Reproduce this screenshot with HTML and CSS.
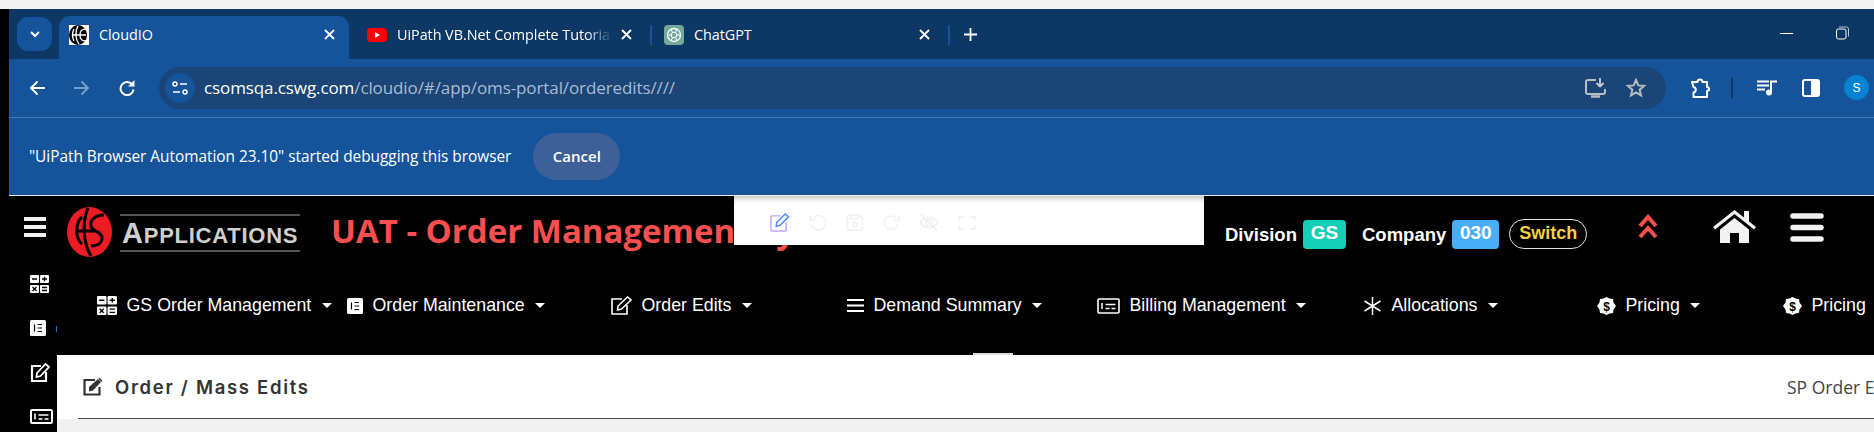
FILE: index.html
```html
<!DOCTYPE html>
<html lang="en">
<head>
<meta charset="utf-8">
<title>CloudIO</title>
<link rel="stylesheet" href="styles.css">
</head>
<body>
<div class="topstrip"></div>
<div class="shell">
  <div class="leftedge"></div>
  <div class="window">
    <div class="tabstrip">
      <div class="tabsearch"><svg width="14" height="14" viewBox="0 0 14 14"><path d="M3 5l4 4 4-4" fill="none" stroke="#fff" stroke-width="2"/></svg></div>
      <div class="tab active">
        <svg class="fav" width="20" height="20" viewBox="0 0 20 20"><rect width="20" height="20" fill="#fff"/><ellipse cx="9" cy="10" rx="9" ry="10" fill="#000"/><path d="M9 1C6 6 6 14 10 19M5 4C3 8 3 12 5 16M4 10h13M17 4c-5 0-6 2-6 6s1 6 6 6" stroke="#fff" stroke-width="1.400" fill="none"/></svg>
        <span class="tabtitle">CloudIO</span>
        <svg class="tabx" width="11" height="11" viewBox="0 0 11 11"><path d="M1 1l9 9M10 1l-9 9" stroke="#fff" stroke-width="1.800"/></svg>
      </div>
      <div class="tab yt">
        <svg class="fav" width="20" height="20" viewBox="0 0 20 20"><rect y="3" width="20" height="14" rx="4" fill="#f00"/><path d="M8 7l5 3-5 3z" fill="#fff"/></svg>
        <span class="tabtitle fade">UiPath VB.Net Complete Tutoria</span>
        <svg class="tabx" width="11" height="11" viewBox="0 0 11 11"><path d="M1 1l9 9M10 1l-9 9" stroke="#fff" stroke-width="1.800"/></svg>
      </div>
      <div class="tabsep"></div>
      <div class="tab gpt">
        <svg class="fav" width="20" height="20" viewBox="0 0 20 20"><rect width="20" height="20" rx="4" fill="#74aa9c"/><circle cx="10" cy="10" r="6.500" fill="none" stroke="#fff" stroke-width="1.300"/><path d="M7 4.500l6 11M13 4.500l-6 11M3.500 10h13" stroke="#fff" stroke-width="1"/><circle cx="10" cy="10" r="2.800" fill="#74aa9c" stroke="#fff"/></svg>
        <span class="tabtitle">ChatGPT</span>
        <svg class="tabx" width="11" height="11" viewBox="0 0 11 11"><path d="M1 1l9 9M10 1l-9 9" stroke="#fff" stroke-width="1.800"/></svg>
      </div>
      <div class="tabsep"></div>
      <div class="newtab"><svg width="13" height="13" viewBox="0 0 13 13"><path d="M6.500 0v13M0 6.500h13" stroke="#fff" stroke-width="1.800"/></svg></div>
      <div class="winctl">
        <svg width="13" height="14" viewBox="0 0 13 14"><path d="M0 7.500h13" stroke="#fff" stroke-width="1"/></svg>
        <svg width="13" height="14" viewBox="0 0 13 14"><rect x=".5" y="3" width="9.500" height="10" rx="2" fill="none" stroke="#fff"/><path d="M3 1h7.500A2 2 0 0 1 12.500 3v7.500" fill="none" stroke="#b9c7d8"/></svg>
      </div>
    </div>
    <div class="toolbar">
      <svg class="navicon" width="16" height="16" viewBox="0 0 16 16"><path d="M16 8H2M8.500 1.500L2 8l6.500 6.500" fill="none" stroke="#fff" stroke-width="2"/></svg>
      <svg class="navicon" width="16" height="16" viewBox="0 0 16 16"><path d="M0 8h14M7.500 1.500L14 8l-6.500 6.500" fill="none" stroke="#7c9cc4" stroke-width="2"/></svg>
      <svg class="navicon" width="16" height="16" viewBox="0 0 16 16"><path d="M13.500 5A6.500 6.500 0 1 0 14.500 9.500" fill="none" stroke="#fff" stroke-width="2"/><path d="M15.500 0v6.500H9z" fill="#fff"/></svg>
      <div class="omnibox">
        <div class="sitebtn"><svg width="18" height="16" viewBox="0 0 18 16"><circle cx="4" cy="4" r="2" fill="none" stroke="#fff" stroke-width="1.500"/><path d="M9 4h7M2 12h7" stroke="#fff" stroke-width="1.500"/><circle cx="14" cy="12" r="2" fill="none" stroke="#fff" stroke-width="1.500"/></svg></div>
        <div class="url"><span class="host">csomsqa.cswg.com</span>/cloudio/#/app/oms-portal/orderedits////</div>
        <svg class="omniicon install" width="21" height="20" viewBox="0 0 21 20"><path d="M11 2H3a2 2 0 0 0-2 2v10a2 2 0 0 0 2 2h15a2 2 0 0 0 2-2v-3" fill="none" stroke="#b8bcc4" stroke-width="2"/><path d="M6 18.500h9" stroke="#b8bcc4" stroke-width="2.500"/><path d="M15 0v7.500M11.500 5l3.500 3.500L18.500 5" fill="none" stroke="#c8ccd2" stroke-width="1.800"/></svg>
        <svg class="omniicon star" width="20" height="20" viewBox="0 0 20 20"><path d="M10 2l2.300 5.400 5.700.5-4.300 3.800 1.300 5.700-5-3-5 3 1.300-5.700L2 7.900l5.700-.5z" fill="none" stroke="#b8bcc4" stroke-width="2"/></svg>
      </div>
      <svg class="ext" width="21" height="20" viewBox="0 0 21 20"><path d="M2 4h5.500a2.500 2.500 0 0 1 5 0H17v5a2 2 0 0 1 0 4v6H3.500v-4.500a2.800 2.800 0 0 0 0-5.500z" fill="none" stroke="#fff" stroke-width="2" stroke-linejoin="round"/></svg>
      <div class="toolsep"></div>
      <svg class="media" width="20" height="16" viewBox="0 0 20 16"><path d="M0 1.500h12M0 5.500h12M0 9.500h8" stroke="#fff" stroke-width="2"/><path d="M14 12V1.500h6" fill="none" stroke="#fff" stroke-width="2"/><circle cx="12" cy="12.500" r="3" fill="#fff"/></svg>
      <svg class="panel" width="18" height="18" viewBox="0 0 18 18"><rect x="1" y="1" width="16" height="16" rx="2" fill="none" stroke="#fff" stroke-width="2"/><rect x="9" y="1" width="8" height="16" fill="#fff"/></svg>
      <div class="avatar">S</div>
    </div>
    <div class="infobar">
      <span class="infotext">"UiPath Browser Automation 23.10" started debugging this browser</span>
      <span class="cancel">Cancel</span>
    </div>
  </div>
</div>

<div class="app">
  <div class="header">
    <svg class="burger" width="22" height="20" viewBox="0 0 22 20"><path d="M0 2h22M0 10h22M0 18h22" stroke="#f0f0f0" stroke-width="4"/></svg>
    <svg class="logomark" width="45" height="50" viewBox="0 0 45 50"><ellipse cx="22.500" cy="25" rx="22.500" ry="25" fill="#ed1c24"/><path d="M15 10C8 16 8 31 15 37M21 1C15 15 16 36 24 49M10 24h19M37 8C28 8 23 13 24 19c1 6 11 5 11 12 0 6-6 8-11 8" fill="none" stroke="#000" stroke-width="3"/></svg>
    <div class="logoword"><span class="cap">A</span>PPLICATIONS</div>
    <div class="apptitle">UAT - Order Management System</div>
    <div class="headright">
      <span class="hlabel">Division</span><span class="badge teal">GS</span>
      <span class="hlabel co">Company</span><span class="badge blue">030</span>
      <span class="switch">Switch</span>
      <svg class="chev" width="20" height="25" viewBox="0 0 20 25"><path d="M2 12l8-9 8 9M2 23l8-9 8 9" fill="none" stroke="#f94f4f" stroke-width="4"/></svg>
      <svg class="home" width="43" height="33" viewBox="0 0 43 33"><path d="M0 17L21.500 0 31 7.500V1h5v10.500L43 17l-2 2.500L21.500 4 2 19.500z" fill="#f2f2f2"/><path d="M7 19.500L21.500 8 36 19.500V33H26V23h-9v10H7z" fill="#f2f2f2"/></svg>
      <svg class="menu" width="34" height="29" viewBox="0 0 34 29"><path d="M3 3h28M3 14.500h28M3 26h28" stroke="#f2f2f2" stroke-width="5.500" stroke-linecap="round"/></svg>
    </div>
  </div>

  <div class="floater">
    <div class="floaticons">
      <svg width="21" height="19" viewBox="0 0 22 20"><path d="M12 3H3a1 1 0 0 0-1 1v14a1 1 0 0 0 1 1h14a1 1 0 0 0 1-1v-8" fill="none" stroke="#b4a6ff" stroke-width="1.500"/><path d="M8 10L17 1l3.500 3-9 9-4 1z" fill="none" stroke="#4d86ff" stroke-width="1.500"/></svg>
      <svg width="20" height="18" viewBox="0 0 20 20"><path d="M5 4a8 8 0 1 1-2 8M1.500 2v5h5" fill="none" stroke="#f0f1f3" stroke-width="1.800"/></svg>
      <svg width="19" height="17" viewBox="0 0 19 18"><path d="M2 1h11l4 4v11a1 1 0 0 1-1 1H2a1 1 0 0 1-1-1V2a1 1 0 0 1 1-1z" fill="none" stroke="#f0f1f3" stroke-width="1.800"/><circle cx="9" cy="11" r="2.500" fill="none" stroke="#f0f1f3" stroke-width="1.800"/><path d="M5 1v4h7V1" fill="none" stroke="#f0f1f3" stroke-width="1.500"/></svg>
      <svg width="17" height="18" viewBox="0 0 20 20"><path d="M15 4a8 8 0 1 0 2 8M18.500 2v5h-5" fill="none" stroke="#f0f1f3" stroke-width="1.800"/></svg>
      <svg width="22" height="19" viewBox="0 0 24 22"><path d="M2 11c5-8 15-8 20 0-5 8-15 8-20 0z" fill="none" stroke="#eeeff1" stroke-width="1.800"/><circle cx="12" cy="11" r="3.500" fill="none" stroke="#eeeff1" stroke-width="1.800"/><path d="M2 1l20 20" stroke="#eeeff1" stroke-width="1.800"/></svg>
      <svg width="18" height="14" viewBox="0 0 18 14"><path d="M1 5V1h5M12 1h5v4M17 9v4h-5M6 13H1V9" fill="none" stroke="#f0f1f3" stroke-width="1.800"/></svg>
    </div>
  </div>

  <div class="workspace">
    <div class="sidebar">
      <svg width="19" height="18" viewBox="0 0 19 18"><path d="M1 0h7a1 1 0 0 1 1 1v6a1 1 0 0 1-1 1H1a1 1 0 0 1-1-1V1a1 1 0 0 1 1-1zM11 0h7a1 1 0 0 1 1 1v6a1 1 0 0 1-1 1h-7a1 1 0 0 1-1-1V1a1 1 0 0 1 1-1zM1 10h7a1 1 0 0 1 1 1v6a1 1 0 0 1-1 1H1a1 1 0 0 1-1-1v-6a1 1 0 0 1 1-1zM11 10h7a1 1 0 0 1 1 1v6a1 1 0 0 1-1 1h-7a1 1 0 0 1-1-1v-6a1 1 0 0 1 1-1z" fill="#fff"/><path d="M2 4h5M12 4h5M14.500 1.800v4.400M2.500 12l4 4M6.500 12l-4 4M12 12.500h5M12 15.500h5" stroke="#000" stroke-width="1.300"/></svg>
      <svg width="16" height="16" viewBox="0 0 16 16"><rect width="16" height="16" rx="1.500" fill="#fff"/><path d="M4.500 4.500v7M7.500 4.500h4.500M7.500 8h4.500M7.500 11.500h4.500" stroke="#000" stroke-width="1.200"/></svg>
      <svg width="20" height="19" viewBox="0 0 20 19"><path d="M11 3H2v15h14V9" fill="none" stroke="#fff" stroke-width="2.200"/><path d="M7 10L15.500 1l3.500 3L10.500 13l-4 1z" fill="none" stroke="#fff" stroke-width="1.800"/></svg>
      <svg width="23" height="15" viewBox="0 0 23 15"><rect x="1" y="1" width="21" height="13" rx="1" fill="none" stroke="#fff" stroke-width="2"/><path d="M5 4.500v6M8.500 6h10M8.500 10h4M14.500 10h4" stroke="#fff" stroke-width="1.600"/></svg>
      <span class="sidecut"></span>
    </div>
    <div class="mainarea">
      <div class="navbar">
        <div class="navitem i1"><svg width="20" height="19" viewBox="0 0 19 18"><path d="M1 0h7a1 1 0 0 1 1 1v6a1 1 0 0 1-1 1H1a1 1 0 0 1-1-1V1a1 1 0 0 1 1-1zM11 0h7a1 1 0 0 1 1 1v6a1 1 0 0 1-1 1h-7a1 1 0 0 1-1-1V1a1 1 0 0 1 1-1zM1 10h7a1 1 0 0 1 1 1v6a1 1 0 0 1-1 1H1a1 1 0 0 1-1-1v-6a1 1 0 0 1 1-1zM11 10h7a1 1 0 0 1 1 1v6a1 1 0 0 1-1 1h-7a1 1 0 0 1-1-1v-6a1 1 0 0 1 1-1z" fill="#fff"/><path d="M2 4h5M12 4h5M14.500 1.800v4.400M2.500 12l4 4M6.500 12l-4 4M12 12.500h5M12 15.500h5" stroke="#000" stroke-width="1.300"/></svg><span>GS Order Management</span><i class="caret"></i></div>
        <div class="navitem i2"><svg width="16" height="16" viewBox="0 0 16 16"><rect width="16" height="16" rx="1.500" fill="#fff"/><path d="M4.500 4.500v7M7.500 4.500h4.500M7.500 8h4.500M7.500 11.500h4.500" stroke="#000" stroke-width="1.200"/></svg><span>Order Maintenance</span><i class="caret"></i></div>
        <div class="navitem i3"><svg width="22" height="19" viewBox="0 0 22 19"><path d="M12 3H2v15h15V9" fill="none" stroke="#fff" stroke-width="1.600"/><path d="M8 10L17.500 1l3.500 3L11.500 13l-4 1z" fill="none" stroke="#fff" stroke-width="1.500"/></svg><span>Order Edits</span><i class="caret"></i></div>
        <div class="navitem i4"><svg width="17" height="15" viewBox="0 0 17 15"><path d="M0 2h17M0 7.500h17M0 13h17" stroke="#fff" stroke-width="2"/></svg><span>Demand Summary</span><i class="caret"></i></div>
        <div class="navitem i5"><svg width="23" height="16" viewBox="0 0 23 16"><rect x="1" y="1" width="21" height="14" rx="1" fill="none" stroke="#fff" stroke-width="1.600"/><path d="M5 5v6M8.500 6.500h10M8.500 10.500h4M14.500 10.500h4" stroke="#fff" stroke-width="1.500"/></svg><span>Billing Management</span><i class="caret"></i></div>
        <div class="navitem i6"><svg width="19" height="18" viewBox="0 0 19 18"><path d="M9.500 0v18M1.500 4l16 10M17.500 4l-16 10" stroke="#fff" stroke-width="1.500"/></svg><span>Allocations</span><i class="caret"></i></div>
        <div class="navitem i7"><svg width="19" height="18" viewBox="0 0 19 18"><path d="M9.500 0l3 1.500 3.500.5.500 3.500L19 9l-2.500 3.500-.5 3.500-3.500.5L9.500 18l-3-1.500L3 16l-.5-3.500L0 9l2.500-3.500L3 2l3.500-.5z" fill="#fff"/><text x="9.500" y="13.500" class="dollar">$</text></svg><span>Pricing</span><i class="caret"></i></div>
        <div class="navitem i8"><svg width="19" height="18" viewBox="0 0 19 18"><path d="M9.500 0l3 1.500 3.500.5.500 3.500L19 9l-2.500 3.500-.5 3.500-3.500.5L9.500 18l-3-1.500L3 16l-.5-3.500L0 9l2.500-3.500L3 2l3.500-.5z" fill="#fff"/><text x="9.500" y="13.500" class="dollar">$</text></svg><span>Pricing</span></div>
        <div class="handle"></div>
      </div>
      <div class="pagehead">
        <div class="pagetitle"><svg width="22" height="19" viewBox="0 0 22 19"><path d="M12 3H1.500v14.500h15V10" fill="none" stroke="#333" stroke-width="2.200"/><path d="M6 10L15 2l3 3-8 8.500-4 1z" fill="#333"/><path d="M16.500 .8l3 3-1 1-3-3z" fill="#333"/></svg><span>Order / Mass Edits</span></div>
        <div class="sporder">SP Order Edits</div>
      </div>
      <div class="pagebody"></div>
    </div>
  </div>
</div>
</body>
</html>
```

FILE: styles.css
```css
* { box-sizing: border-box; }
html, body { margin: 0; padding: 0; width: 1874px; height: 432px; overflow: hidden; background: #000; }
body { font-family: "Liberation Sans", Arial, sans-serif; position: relative; }
svg { display: block; flex: none; }

.topstrip { height: 9px; background: #f3f3f3; }
.shell { display: flex; height: 187px; background: #000; }
.leftedge { width: 9px; background: #000; flex: none; }
.window { flex: 1; min-width: 0; display: flex; flex-direction: column; overflow: hidden; border-bottom: 1px solid #e8eef5; }

.tabstrip { height: 50px; flex: none; background: #0d3764; display: flex; align-items: flex-start; position: relative; color: #fff; font-family: "Open Sans", "Noto Sans", sans-serif; }
.tabsearch { width: 35px; height: 34px; margin: 8px 0 0 8px; border-radius: 11px; background: #15539a; display: flex; align-items: center; justify-content: center; flex: none; }
.tab { display: flex; align-items: center; height: 43px; margin-top: 7px; padding-bottom: 6px; flex: none; }
.tab.active { width: 290px; margin-left: 7px; padding-left: 10px; background: #15539a; border-radius: 11px 11px 0 0; }
.tab.yt { width: 301px; padding-left: 18px; }
.tab.gpt { width: 296px; padding-left: 12px; }
.fav { margin-right: 10px; }
.tabtitle { flex: 1; white-space: nowrap; overflow: hidden; font-size: 14.400px; letter-spacing: -.05px; }
.tabtitle.fade { flex: none; width: 215px; margin-right: 9px; -webkit-mask-image: linear-gradient(90deg, #000 88%, transparent); mask-image: linear-gradient(90deg, #000 88%, transparent); }
.tabx { margin-right: 14px; }
.yt .tabx { margin-right: 18px; }
.gpt .tabx { margin-right: 18px; }
.tabsep { width: 2px; height: 20px; margin-top: 16px; background: #15539a; flex: none; }
.newtab { margin: 19px 0 0 14px; }
.winctl { margin: 17px 0 0 803px; display: flex; gap: 43px; }

.toolbar { height: 59px; flex: none; background: #15539a; border-bottom: 1px solid #4677b0; display: flex; align-items: center; padding: 0 0 1px 20px; color: #fff; }
.navicon { margin-right: 29px; }
.omnibox { width: 1507px; height: 42px; margin-left: -5px; border-radius: 21px; background: #1a4576; display: flex; align-items: center; padding: 0 20px 0 6px; flex: none; }
.sitebtn { width: 30px; height: 30px; border-radius: 50%; background: #15539a; display: flex; align-items: center; justify-content: center; flex: none; }
.url { flex: 1; margin-left: 9px; font-family: "Open Sans", "Noto Sans", sans-serif; font-size: 17px; letter-spacing: -.1px; color: #a9bcd2; white-space: nowrap; }
.host { color: #fff; }
.omniicon.star { margin-left: 20px; }
.ext { margin-left: 24px; }
.toolsep { width: 2px; height: 20px; margin-left: 20px; background: #0d3764; flex: none; }
.media { margin-left: 24px; }
.panel { margin-left: 25px; }
.avatar { width: 25px; height: 25px; margin-left: 24px; border-radius: 50%; background: #0583d2; color: #fff; font-size: 12px; display: flex; align-items: center; justify-content: center; flex: none; }

.infobar { height: 77px; flex: none; background: #15539a; display: flex; align-items: center; padding: 0 0 1px 20px; color: #fff; font-family: "Open Sans", "Noto Sans", sans-serif; }
.infotext { font-size: 15.400px; letter-spacing: -.02px; white-space: nowrap; }
.cancel { width: 87px; height: 47px; margin-left: 22px; border-radius: 24px; background: #3d6098; display: flex; align-items: center; justify-content: center; font-size: 15px; font-weight: 600; flex: none; }

.app { height: 236px; position: relative; background: #000; }
.header { height: 64px; display: flex; align-items: flex-start; padding-left: 24px; color: #fff; }
.burger { margin: 21px 21px 0 0; }
.logomark { margin: 11px 8px 0 0; }
.logoword { height: 38px; width: 180px; flex: none; margin-top: 18px; border-top: 2px solid #555; border-bottom: 2px solid #555; color: #cfcfcf; font-weight: 700; font-size: 22px; line-height: 34px; letter-spacing: .75px; white-space: nowrap; padding-left: 2px; }
.logoword .cap { font-size: 29px; }
.apptitle { margin: 15px 0 0 31px; width: 894px; color: #f94f4f; font-family: "Open Sans", "Liberation Sans", sans-serif; font-weight: 700; font-size: 33px; line-height: 40px; white-space: nowrap; flex: none; }
.headright { display: flex; align-items: flex-start; white-space: nowrap; font-weight: 700; font-size: 18.500px; padding-top: 24px; line-height: 29px; }
.hlabel { height: 29px; line-height: 29px; }
.hlabel.co { margin-left: 16px; }
.badge { height: 29px; margin-left: 6px; border-radius: 4px; font-size: 19px; line-height: 26px; color: #fff; text-align: center; }
.badge.teal { background: #13cfb6; width: 43px; }
.badge.blue { background: #48aef8; width: 47px; }
.switch { height: 30px; margin-left: 10px; width: 78px; border: 1px solid #e0e0e0; border-radius: 15px; color: #f7ce46; text-align: center; line-height: 26px; font-size: 18px; margin-top: -1px; }
.chev { margin: -6px 0 0 51px; }
.home { margin: -10px 0 0 55px; }
.menu { margin: -7px 0 0 34px; }

.floater { position: absolute; left: 734px; top: 0; width: 470px; height: 49px; background: #fff; box-shadow: inset 0 6px 6px -4px #bbb; padding: 17px 0 0 35px; }
.floaticons { display: flex; gap: 18px; align-items: center; }

.workspace { display: flex; height: 172px; }
.sidebar { width: 57px; flex: none; display: flex; flex-direction: column; align-items: flex-start; padding: 15px 0 0 30px; gap: 27px; position: relative; }
.sidecut { position: absolute; left: 56px; top: 66px; width: 1px; height: 6px; background: #1a6fc4; }
.mainarea { flex: 1; min-width: 0; display: flex; flex-direction: column; }
.navbar { height: 95px; flex: none; display: flex; align-items: center; padding-bottom: 4px; position: relative; color: #fff; font-size: 17.800px; white-space: nowrap; }
.navitem { display: flex; align-items: center; gap: 9.500px; flex: none; }
.navitem.i1 { margin-left: 40px; width: 250px; }
.navitem.i2 { width: 263px; }
.navitem.i3 { width: 237px; }
.navitem.i4 { width: 250px; }
.navitem.i5 { width: 266px; }
.navitem.i6 { width: 234px; }
.navitem.i7 { width: 186px; }
.caret { width: 0; height: 0; border-left: 5px solid transparent; border-right: 5px solid transparent; border-top: 5px solid #fff; margin-left: 1px; }
.dollar { font-size: 12px; font-weight: 700; text-anchor: middle; fill: #000; }
.handle { position: absolute; left: 916px; bottom: 0; width: 40px; height: 2px; background: #ddd; }

.pagehead { height: 64px; flex: none; background: #fff; position: relative; display: flex; align-items: center; padding: 0 0 1px 26px; }
.pagehead::after { content: ""; position: absolute; left: 21px; right: 0; bottom: 0; height: 1px; background: #444a55; }
.pagetitle { display: flex; align-items: center; gap: 10px; color: #333; font-family: "Inter", "Open Sans", sans-serif; font-size: 18.500px; font-weight: 600; letter-spacing: 1.700px; }
.sporder { margin-left: auto; width: 87px; color: #444; font-family: "Open Sans", sans-serif; font-size: 17.500px; white-space: nowrap; overflow: hidden; }
.pagebody { flex: 1; background: #f1f1f1; }
```
